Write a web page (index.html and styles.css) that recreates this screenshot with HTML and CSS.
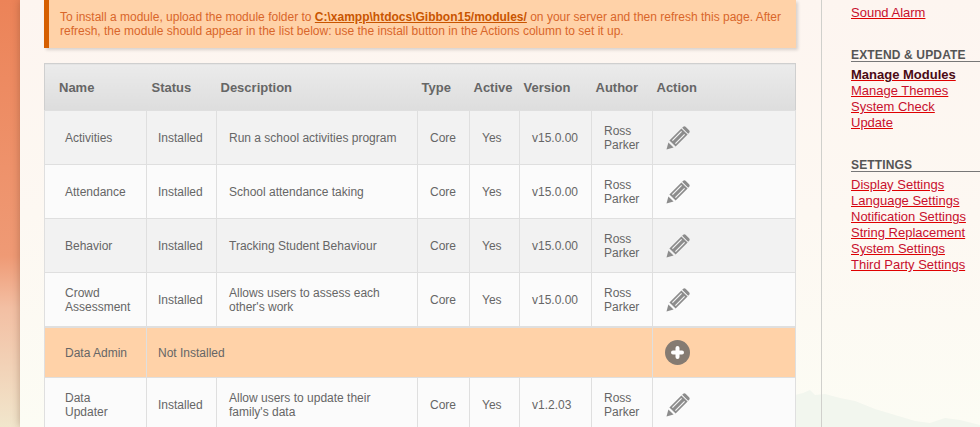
FILE: index.html
```html
<!DOCTYPE html>
<html lang="en">
<head>
    <meta charset="UTF-8">
    <meta name="viewport" content="width=device-width, initial-scale=1.0">
    <title>Manage Modules</title>
    <link rel="stylesheet" href="styles.css">
</head>
<body>
    <svg class="icon-defs" width="0" height="0" aria-hidden="true">
        <symbol id="pencil" viewBox="0 0 24 24">
            <path d="M0.5 23.5 L2.4 16.4 L7.6 21.6 Z" fill="#8c8c8c"/>
            <path d="M3.4 14.4 L15.4 2.4 L21.6 8.6 L9.6 20.6 Z" fill="#8c8c8c"/>
            <path d="M6.4 14.6 L15.6 5.4 M9.4 17.6 L18.6 8.4" stroke="#f4f4f4" stroke-width="1.2"/>
            <path d="M17.2 0.8 Q18.6 -0.2 19.8 0.9 L23.1 4.2 Q24.2 5.4 23.2 6.8 L22.2 7.8 L16.2 1.8 Z" fill="#8c8c8c"/>
        </symbol>
    </svg>
    <div class="main-container">
        <svg class="hills" width="185" height="42" viewBox="0 0 185 42" aria-hidden="true">
            <path d="M0 42 L0 10 L8 8 L15 5 L20 10 L30 9 L45 13 L60 16 L80 24 L100 30 L120 36 L135 38 L150 33 L165 35 L185 40 L185 42 Z" fill="#f2f6ee"/>
        </svg>
        <div class="content">
            <div class="notice">
                To install a module, upload the module folder to <a href="#">C:\xampp\htdocs\Gibbon15/modules/</a> on your server and then refresh this page. After<br>
                refresh, the module should appear in the list below: use the install button in the Actions column to set it up.
            </div>
            <table class="modules">
                <colgroup>
                    <col class="c-name"><col class="c-status"><col class="c-desc"><col class="c-type">
                    <col class="c-active"><col class="c-version"><col class="c-author"><col class="c-action">
                </colgroup>
                <thead>
                    <tr>
                        <th>Name</th><th>Status</th><th>Description</th><th>Type</th>
                        <th>Active</th><th>Version</th><th>Author</th><th>Action</th>
                    </tr>
                </thead>
                <tbody>
                    <tr class="odd">
                        <td class="name">Activities</td><td class="status">Installed</td><td>Run a school activities program</td>
                        <td>Core</td><td>Yes</td><td>v15.0.00</td><td>Ross<br>Parker</td>
                        <td class="action"><svg class="edit"><use href="#pencil"/></svg></td>
                    </tr>
                    <tr>
                        <td class="name">Attendance</td><td class="status">Installed</td><td>School attendance taking</td>
                        <td>Core</td><td>Yes</td><td>v15.0.00</td><td>Ross<br>Parker</td>
                        <td class="action"><svg class="edit"><use href="#pencil"/></svg></td>
                    </tr>
                    <tr class="odd">
                        <td class="name">Behavior</td><td class="status">Installed</td><td>Tracking Student Behaviour</td>
                        <td>Core</td><td>Yes</td><td>v15.0.00</td><td>Ross<br>Parker</td>
                        <td class="action"><svg class="edit"><use href="#pencil"/></svg></td>
                    </tr>
                    <tr>
                        <td class="name">Crowd<br>Assessment</td><td class="status">Installed</td><td>Allows users to assess each<br>other's work</td>
                        <td>Core</td><td>Yes</td><td>v15.0.00</td><td>Ross<br>Parker</td>
                        <td class="action"><svg class="edit"><use href="#pencil"/></svg></td>
                    </tr>
                    <tr class="missing">
                        <td class="name">Data Admin</td><td class="status" colspan="6">Not Installed</td>
                        <td class="action">
                            <svg class="add" viewBox="0 0 25 25">
                                <circle cx="12.5" cy="12.5" r="12.5" fill="#857b72"/>
                                <path d="M12.5 8 V17 M8 12.5 H17" stroke="#fff" stroke-width="4" stroke-linecap="round"/>
                            </svg>
                        </td>
                    </tr>
                    <tr>
                        <td class="name">Data<br>Updater</td><td class="status">Installed</td><td>Allow users to update their<br>family's data</td>
                        <td>Core</td><td>Yes</td><td>v1.2.03</td><td>Ross<br>Parker</td>
                        <td class="action"><svg class="edit"><use href="#pencil"/></svg></td>
                    </tr>
                </tbody>
            </table>
        </div>
        <div class="sidebar">
            <ul class="menu first">
                <li><a href="#">Sound Alarm</a></li>
            </ul>
            <h5>Extend &amp; Update</h5>
            <ul class="menu">
                <li><a href="#" class="current">Manage Modules</a></li>
                <li><a href="#">Manage Themes</a></li>
                <li><a href="#">System Check</a></li>
                <li><a href="#">Update</a></li>
            </ul>
            <h5>Settings</h5>
            <ul class="menu">
                <li><a href="#">Display Settings</a></li>
                <li><a href="#">Language Settings</a></li>
                <li><a href="#">Notification Settings</a></li>
                <li><a href="#">String Replacement</a></li>
                <li><a href="#">System Settings</a></li>
                <li><a href="#">Third Party Settings</a></li>
            </ul>
        </div>
    </div>
</body>
</html>
```

FILE: styles.css
```css
html, body {
    margin: 0;
    padding: 0;
    height: 427px;
    overflow: hidden;
}
body {
    font-family: "Liberation Sans", Arial, sans-serif;
    background: linear-gradient(180deg, #ec8358 0%, #ef9a75 60%, #f3bfa3 72%, #f1e6cc 100%);
}
.icon-defs {
    position: absolute;
}
.main-container {
    position: relative;
    z-index: 0;
    margin-left: 20px;
    height: 427px;
    display: flex;
    background: linear-gradient(180deg, #fdf5f0 0%, #fdf8f2 50%, #fcfcf4 100%);
    box-shadow: 0 0 8px rgba(90, 50, 30, 0.35);
}
.hills {
    position: absolute;
    left: 775px;
    top: 385px;
    z-index: -1;
}
.content {
    width: 752px;
    padding: 0 25px 0 24px;
    border-right: 1px solid #d0d0cc;
    flex-shrink: 0;
}
.notice {
    box-sizing: border-box;
    height: 48px;
    padding: 10px 0 0 11px;
    background-color: #ffd2a8;
    border-left: 5px solid #d65f00;
    box-shadow: 2px 2px 3px rgba(0, 0, 0, 0.15);
    color: #d9662a;
    font-size: 12px;
    line-height: 14px;
}
.notice a {
    color: #c95500;
    font-weight: bold;
}
.modules {
    box-sizing: border-box;
    width: 752px;
    margin-top: 15px;
    table-layout: fixed;
    border-collapse: collapse;
    border: 1px solid #cfcfcf;
    font-size: 12px;
    line-height: 14px;
    color: #666666;
}
.c-name { width: 102px; }
.c-status { width: 70px; }
.c-desc { width: 201px; }
.c-type { width: 52px; }
.c-active { width: 50px; }
.c-version { width: 72px; }
.c-author { width: 61px; }
.modules th {
    height: 45px;
    padding: 1px 0 0 4px;
    text-align: left;
    font-size: 13px;
    color: #666666;
    background: linear-gradient(180deg, #ebebeb, #dddddd);
}
.modules th:first-child {
    padding-left: 14px;
}
.modules th:nth-child(2) {
    padding-left: 5px;
}
.modules td {
    height: 52px;
    padding: 1px 0 0 12px;
    border: 1px solid #dfdfdf;
    background-color: #fbfbfb;
}
.modules tr.odd td {
    background-color: #f2f2f2;
}
.modules td.name {
    padding-left: 20px;
}
.modules td.status {
    padding-left: 11px;
}
.modules tr.missing td {
    height: 49px;
    padding-top: 0;
    background-color: #ffd2a8;
    border-top-width: 2px;
}
.edit {
    display: block;
    width: 24px;
    height: 24px;
    margin-left: 1px;
}
.add {
    display: block;
    width: 25px;
    height: 25px;
}
.sidebar {
    padding-left: 29px;
    font-size: 13px;
    line-height: 16px;
    flex-grow: 1;
}
.menu {
    list-style: none;
    margin: 0;
    padding: 0;
}
.menu.first {
    padding-top: 5px;
}
.menu a {
    color: #c8102e;
    text-decoration-color: #e00000;
}
.menu a.current {
    color: #4a0a14;
    font-weight: bold;
}
.sidebar h5 {
    margin: 27px 0 5px;
    height: 13px;
    font-size: 12px;
    line-height: 15px;
    letter-spacing: 0.15px;
    text-transform: uppercase;
    color: #555555;
    border-bottom: 1px solid #777777;
}
```
